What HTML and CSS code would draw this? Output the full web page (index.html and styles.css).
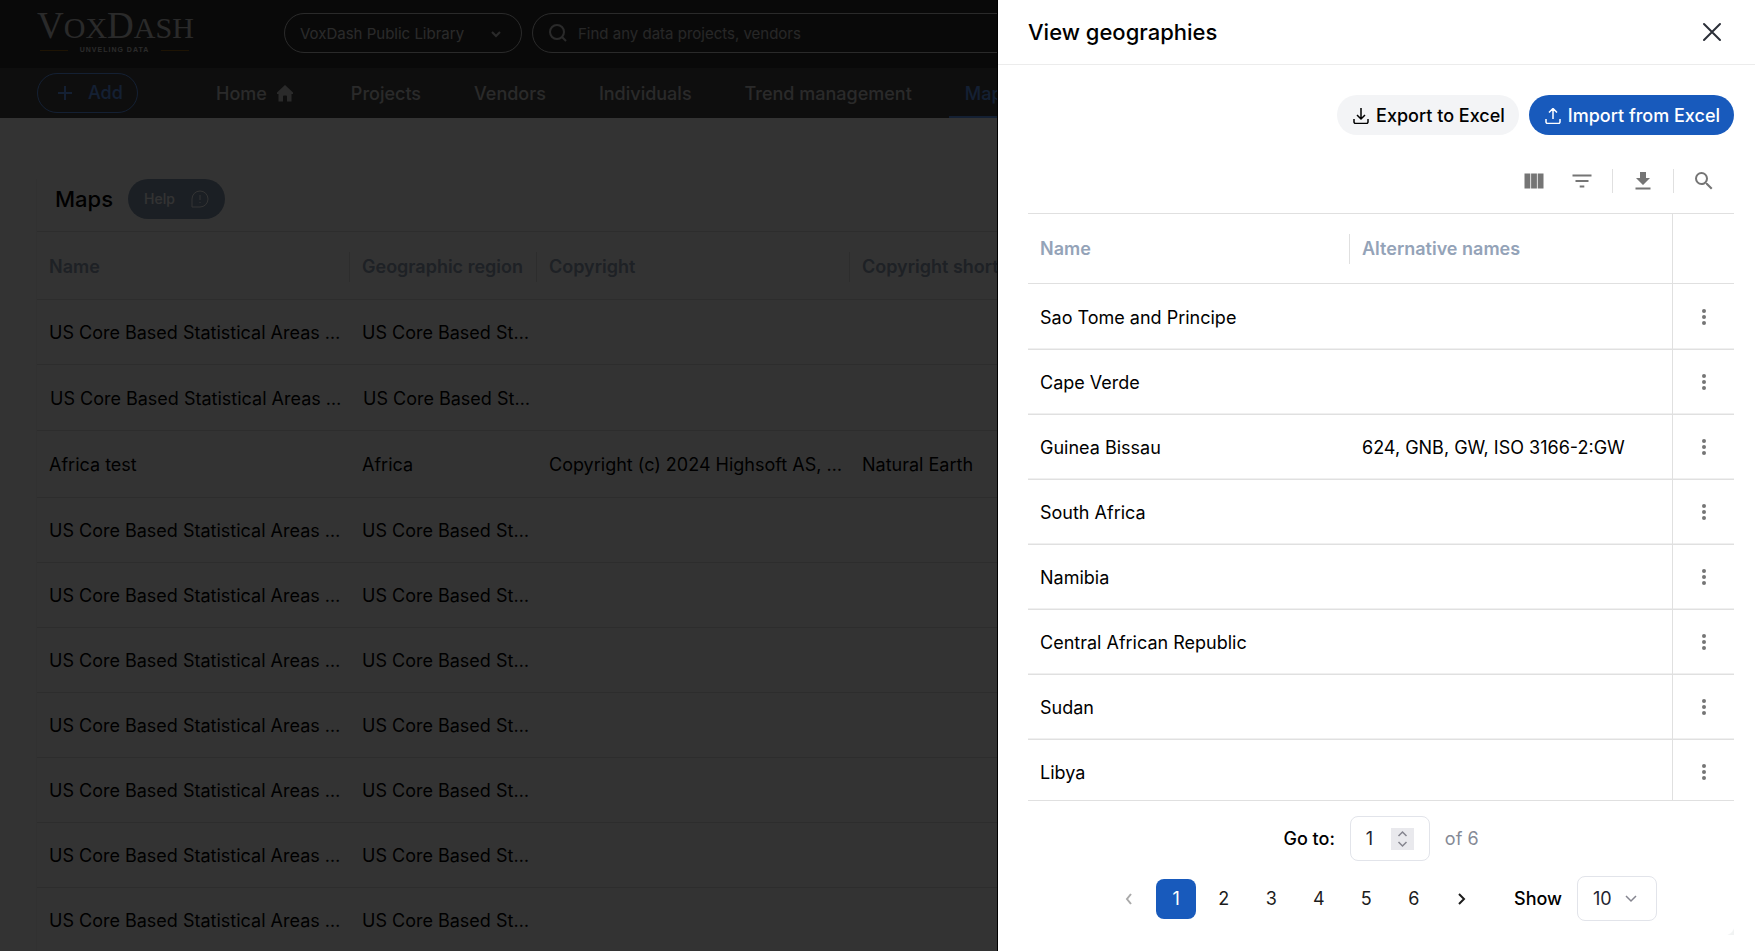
FILE: index.html
```html
<!DOCTYPE html>
<html lang="en">
<head>
    <meta charset="UTF-8">
    <meta name="viewport" content="width=device-width, initial-scale=1.0">
    <title>VoxDash - Maps</title>
    <link rel="stylesheet" href="styles.css">
</head>
<body>
    <!-- Page -->
    <div class="page">
        <header class="topbar">
            <a href="#" class="logo">
                <span class="logo-name">V<small>OX</small>D<small>ASH</small></span>
                <span class="logo-tag">UNVELING DATA</span>
            </a>
            <button class="library" type="button">
                VoxDash Public Library
                <svg width="12" height="12" viewBox="0 0 12 12"><path d="M2 4l4 4 4-4"/></svg>
            </button>
            <label class="search">
                <svg width="18" height="18" viewBox="0 0 18 18"><circle cx="8" cy="8" r="7"/><path d="M13 13l4 4"/></svg>
                <input type="text" placeholder="Find any data projects, vendors" aria-label="Search">
            </label>
        </header>

        <nav class="nav">
            <button class="add" type="button">
                <svg width="16" height="16" viewBox="0 0 16 16"><path d="M8 1v14M1 8h14"/></svg>
                Add
            </button>
            <a href="#" class="home">Home
                <svg width="16" height="17" viewBox="0 0 16 17"><path d="M8 0l8 7.500V9h-1.500v7.500H10V11.500a1 1 0 0 0-1-1H7a1 1 0 0 0-1 1v5H1.500V9H0V7.500z"/></svg>
            </a>
            <a href="#">Projects</a>
            <a href="#">Vendors</a>
            <a href="#">Individuals</a>
            <a href="#">Trend management</a>
            <a href="#" class="active">Maps</a>
        </nav>

        <main class="card">
            <div class="card-head">
                <h1>Maps</h1>
                <button class="help" type="button">
                    Help
                    <svg width="18" height="18" viewBox="0 0 18 18"><path d="M1 17V9a8 8 0 1 1 8 8z"/><path d="M9 5v5M9 12v1"/></svg>
                </button>
            </div>
            <table class="grid maps">
                <colgroup><col class="col-wide"><col class="col-region"><col class="col-wide"><col></colgroup>
                <thead>
                    <tr><th><span>Name</span></th><th><span>Geographic region</span></th><th><span>Copyright</span></th><th><span>Copyright short</span></th></tr>
                </thead>
                <tbody>
                    <tr><td>US Core Based Statistical Areas …</td><td>US Core Based St…</td><td></td><td></td></tr>
                    <tr class="current"><td>US Core Based Statistical Areas …</td><td>US Core Based St…</td><td></td><td></td></tr>
                    <tr class="tall"><td>Africa test</td><td>Africa</td><td>Copyright (c) 2024 Highsoft AS, …</td><td>Natural Earth</td></tr>
                    <tr><td>US Core Based Statistical Areas …</td><td>US Core Based St…</td><td></td><td></td></tr>
                    <tr><td>US Core Based Statistical Areas …</td><td>US Core Based St…</td><td></td><td></td></tr>
                    <tr><td>US Core Based Statistical Areas …</td><td>US Core Based St…</td><td></td><td></td></tr>
                    <tr><td>US Core Based Statistical Areas …</td><td>US Core Based St…</td><td></td><td></td></tr>
                    <tr><td>US Core Based Statistical Areas …</td><td>US Core Based St…</td><td></td><td></td></tr>
                    <tr><td>US Core Based Statistical Areas …</td><td>US Core Based St…</td><td></td><td></td></tr>
                    <tr><td>US Core Based Statistical Areas …</td><td>US Core Based St…</td><td></td><td></td></tr>
                </tbody>
            </table>
        </main>
    </div>

    <!-- Overlay -->
    <div class="overlay"></div>

    <!-- Drawer -->
    <aside class="drawer">
        <header class="drawer-head">
            <h2>View geographies</h2>
            <button class="close" type="button" aria-label="Close">
                <svg width="20" height="20" viewBox="0 0 20 20"><path d="M2 2l16 16M18 2L2 18"/></svg>
            </button>
        </header>

        <div class="drawer-body">
            <div class="actions">
                <button class="btn" type="button">
                    <svg width="16" height="16" viewBox="0 0 16 16"><path d="M8 0v10.500M4 7l4 4 4-4M1 11v3a1.500 1.500 0 0 0 1.500 1.500h11A1.500 1.500 0 0 0 15 14v-3"/></svg>
                    Export to Excel
                </button>
                <button class="btn btn-primary" type="button">
                    <svg width="16" height="16" viewBox="0 0 16 16"><path d="M8 11V1M4 4.500l4-4 4 4M1 11v3a1.500 1.500 0 0 0 1.500 1.500h11A1.500 1.500 0 0 0 15 14v-3"/></svg>
                    Import from Excel
                </button>
            </div>

            <div class="toolbar">
                <button type="button" aria-label="Columns"><svg width="24" height="24" viewBox="0 0 24 24"><path d="M2.500 4.500h5.800v15H2.500zM9.100 4.500h5.800v15H9.100zM15.700 4.500h5.800v15h-5.800z"/></svg></button>
                <button type="button" aria-label="Filters"><svg width="24" height="24" viewBox="0 0 24 24"><path d="M2.500 5.500h19v2h-19zM5.500 11h13v2h-13zM9.700 16.500h4.600v2H9.700z"/></svg></button>
                <span class="split"></span>
                <button type="button" aria-label="Download"><svg width="24" height="24" viewBox="0 0 24 24"><path d="M19 9h-4V3H9v6H5l7 7 7-7zM4.500 18.500h15v2h-15z"/></svg></button>
                <span class="split"></span>
                <button type="button" aria-label="Search"><svg width="24" height="24" viewBox="0 0 24 24"><path d="M15.500 14h-.79l-.28-.27A6.471 6.471 0 0 0 16 9.500 6.500 6.500 0 1 0 9.500 16c1.610 0 3.090-.59 4.230-1.570l.27.28v.79l5 4.990L20.490 19l-4.990-5zm-6 0C7.010 14 5 11.990 5 9.500S7.010 5 9.500 5 14 7.010 14 9.500 11.990 14 9.500 14z"/></svg></button>
            </div>

            <div class="table-wrap">
                <table class="grid geo">
                    <colgroup><col class="col-name"><col><col class="col-menu"></colgroup>
                    <thead>
                        <tr><th><span>Name</span></th><th><span>Alternative names</span></th><th></th></tr>
                    </thead>
                    <tbody id="geoRows"></tbody>
                </table>
            </div>

            <div class="goto">
                <label for="pageNo">Go to:</label>
                <span class="stepper">
                    <input id="pageNo" type="text" value="1">
                    <svg width="23" height="22" viewBox="0 0 23 22"><path d="M7.500 8l4-4 4 4M7.500 14l4 4 4-4"/></svg>
                </span>
                <span class="total">of 6</span>
            </div>

            <div class="pager">
                <div class="pages">
                    <button type="button" class="prev" aria-label="Previous"><svg width="10" height="16" viewBox="0 0 10 16"><path d="M7 3L3 8l4 5"/></svg></button>
                    <button type="button" class="active">1</button>
                    <button type="button">2</button>
                    <button type="button">3</button>
                    <button type="button">4</button>
                    <button type="button">5</button>
                    <button type="button">6</button>
                    <button type="button" aria-label="Next"><svg width="10" height="16" viewBox="0 0 10 16"><path d="M3 3l5 5-5 5"/></svg></button>
                </div>
                <label for="pageSize">Show</label>
                <span class="size">
                    <select id="pageSize"><option>10</option><option>25</option><option>50</option></select>
                    <svg width="12" height="8" viewBox="0 0 12 8"><path d="M1 1l5 5 5-5"/></svg>
                </span>
            </div>
        </div>
    </aside>

    <script>
        const rows = [
            ['Sao Tome and Principe', ''],
            ['Cape Verde', ''],
            ['Guinea Bissau', '624, GNB, GW, ISO 3166-2:GW'],
            ['South Africa', ''],
            ['Namibia', ''],
            ['Central African Republic', ''],
            ['Sudan', ''],
            ['Libya', '']
        ];
        const dots = '<button class="more" type="button" aria-label="Row menu"><svg width="4" height="18" viewBox="0 0 4 18"><circle cx="2" cy="3" r="2"/><circle cx="2" cy="9" r="2"/><circle cx="2" cy="15" r="2"/></svg></button>';

        document.getElementById('geoRows').innerHTML = rows.map(function(r) {
            return '<tr><td>' + r[0] + '</td><td>' + r[1] + '</td><td>' + dots + '</td></tr>';
        }).join('');
    </script>
</body>
</html>
```

FILE: styles.css
```css
* {
    margin: 0;
    padding: 0;
    box-sizing: border-box;
}

body {
    height: 100vh;
    overflow: hidden;
    font-family: Inter, "Liberation Sans", sans-serif;
    font-size: 18px;
    line-height: 24px;
    color: #000;
    background: #fff;
}

button, input, select {
    font: inherit;
    color: inherit;
    background: none;
    border: none;
    outline: none;
}

button {
    cursor: pointer;
}

a {
    color: inherit;
    text-decoration: none;
}

svg {
    flex-shrink: 0;
    fill: none;
    stroke: currentColor;
    stroke-width: 2;
}

/* Page */
.page {
    height: 100vh;
    overflow: hidden;
}

.topbar {
    display: flex;
    align-items: center;
    height: 68px;
    padding: 0 37px 2px;
    color: #d0d0d0;
    background: #303030;
}

.logo {
    display: flex;
    flex-direction: column;
    width: 155px;
    margin-right: 92px;
    color: #d0d0d0;
    font-family: "Liberation Serif", serif;
}

.logo-name {
    font-size: 37px;
    line-height: 32px;
    white-space: nowrap;
}

.logo-name small {
    font-size: 30px;
}

.logo-tag {
    display: flex;
    align-items: center;
    justify-content: space-between;
    padding: 0 3px;
    font: 700 7px/12px "Liberation Sans", sans-serif;
    letter-spacing: 1px;
}

.logo-tag::before,
.logo-tag::after {
    content: "";
    width: 28px;
    height: 1px;
    background: #966414;
}

.library,
.search {
    display: flex;
    align-items: center;
    height: 40px;
    border: 1px solid #d0d0d0;
    border-radius: 20px;
    font-size: 15px;
}

.library {
    justify-content: space-between;
    width: 238px;
    margin-right: 10px;
    padding: 2px 19px 0 15px;
}

.search {
    flex: 1;
    gap: 11px;
    padding: 0 16px;
}

.search input {
    flex: 1;
    padding-top: 2px;
}

.search input::placeholder {
    color: #c0c0c0;
}

.nav {
    display: flex;
    align-items: center;
    gap: 21px;
    height: 50px;
    padding: 0 37px;
    font-weight: 500;
    color: #d0d0d0;
    background: #474747;
}

.nav a {
    display: flex;
    align-items: center;
    gap: 12px;
    height: 50px;
    padding: 3px 16px 0;
    border-bottom: 2px solid transparent;
}

.nav .home {
    gap: 10px;
    margin-right: 5px;
}

.nav a svg {
    fill: currentColor;
    stroke: none;
}

.nav a.active {
    color: #64a0ff;
    border-color: #64a0ff;
}

.add {
    display: flex;
    align-items: center;
    gap: 15px;
    width: 101px;
    height: 40px;
    margin-right: 41px;
    padding: 0 19px;
    border: 1px solid #64a0ff;
    border-radius: 20px;
    color: #64a0ff;
    font-weight: 500;
}

.card {
    margin: 61px 36px 0;
    border-left: 1px solid #f2f2f2;
}

.card-head {
    display: flex;
    align-items: center;
    gap: 15px;
    height: 52px;
    padding: 0 18px 12px;
}

.card-head h1,
.drawer-head h2 {
    font-size: 22px;
    font-weight: 500;
}

.help {
    display: flex;
    align-items: center;
    gap: 16px;
    height: 40px;
    padding: 0 16px;
    border-radius: 20px;
    color: #fff;
    background: #879bb4;
    font-size: 14px;
    font-weight: 500;
}

.help svg {
    stroke-width: 1;
}

/* Tables */
.grid {
    width: 100%;
    border-collapse: separate;
    border-spacing: 0;
    table-layout: fixed;
}

.grid th,
.grid td {
    height: 65px;
    padding: 2px 12px 0;
    border-bottom: 1px solid #e0e0e0;
    text-align: left;
    font-weight: 400;
    white-space: nowrap;
}

.grid th {
    color: #94a3b8;
    font-weight: 600;
}

.grid th span {
    display: block;
}

.grid th + th span {
    margin-left: -13px;
    padding-left: 12px;
    border-left: 1px solid #e0e0e0;
    line-height: 30px;
}

.maps th {
    height: 69px;
    border-top: 1px solid #e0e0e0;
}

.maps .current td {
    height: 66px;
}

.maps .tall td {
    height: 67px;
}

.maps .current td:first-child,
.maps .current td:nth-child(2) {
    padding-left: 13px;
}

.col-wide {
    width: 313px;
}

.col-region {
    width: 187px;
}

/* Overlay */
.overlay {
    position: fixed;
    inset: 0;
    background: rgba(0, 0, 0, 0.8);
}

/* Drawer */
.drawer {
    position: fixed;
    top: 0;
    right: 0;
    bottom: 0;
    display: flex;
    flex-direction: column;
    width: 758px;
    border-left: 1px solid #000;
    background: #fff;
}

.drawer-head {
    display: flex;
    align-items: center;
    justify-content: space-between;
    height: 65px;
    padding: 0 33px 0 30px;
    border-bottom: 1px solid #ececec;
}

.close {
    display: flex;
    color: #2b2f38;
}

.close svg {
    stroke-linecap: round;
}

.drawer-body {
    position: relative;
    display: flex;
    flex: 1;
    flex-direction: column;
    min-height: 0;
    padding: 30px 21px 30px 30px;
}

/* Shaded corner of the table panel */
.drawer-body::after {
    content: "";
    position: absolute;
    right: 21px;
    bottom: 16px;
    width: 10px;
    height: 10px;
    background: radial-gradient(circle at 0 0, #fff 10px, #f1f3f3 11px);
}

.actions {
    display: flex;
    justify-content: flex-end;
    gap: 10px;
}

.btn {
    display: flex;
    align-items: center;
    gap: 7px;
    height: 40px;
    padding: 2px 14px 0 16px;
    border-radius: 20px;
    background: #f3f4f6;
    font-weight: 500;
}

.btn svg {
    stroke-width: 1.500;
}

.btn-primary {
    color: #fff;
    background: #185abc;
}

.toolbar {
    display: flex;
    align-items: center;
    justify-content: flex-end;
    margin: 22px 6px 8px 0;
    color: #757575;
}

.toolbar button {
    display: flex;
    padding: 12px;
}

.toolbar svg,
.more svg {
    fill: currentColor;
    stroke: none;
}

.split {
    width: 1px;
    height: 24px;
    margin: 0 6px;
    background: #e0e0e0;
}

.table-wrap {
    flex: 1;
    min-height: 0;
    overflow: hidden;
    border-top: 1px solid #e0e0e0;
    border-bottom: 1px solid #e0e0e0;
}

.geo th {
    height: 70px;
    padding-top: 0;
}

.geo td {
    box-shadow: inset 0 -1px #f0f0f0;
}

.geo tr:first-child td {
    height: 66px;
}

.geo th:last-child,
.geo td:last-child {
    padding: 0;
    border-left: 1px solid #e0e0e0;
    text-align: center;
}

.col-name {
    width: 322px;
}

.col-menu {
    width: 62px;
}

.more {
    padding: 8px;
    color: #757575;
    line-height: 0;
}

.goto,
.pager {
    display: flex;
    align-items: center;
    justify-content: center;
}

.goto {
    gap: 15px;
    margin: 15px 0;
}

.goto label,
.pager label {
    font-weight: 500;
}

.stepper,
.size {
    display: flex;
    align-items: center;
    width: 80px;
    height: 45px;
    padding: 0 15px;
    border: 1px solid #e2e4ea;
    border-radius: 8px;
    color: #232530;
}

.stepper input {
    width: 25px;
}

.stepper svg {
    color: #85858f;
    background: #e9e9ed;
    stroke-width: 1.500;
}

.total {
    color: #858a96;
}

.pages {
    display: grid;
    grid-template-columns: repeat(8, 1fr);
    width: 380px;
    margin-right: 29px;
}

.pages button {
    display: flex;
    align-items: center;
    justify-content: center;
    justify-self: center;
    width: 40px;
    height: 40px;
    border-radius: 8px;
    color: #1c1c1c;
}

.pages .prev {
    color: #aaa;
}

.pages .active {
    color: #fff;
    background: #185abc;
}

.pager label {
    margin-right: 15px;
}

.size select {
    width: 32px;
    appearance: none;
}

.size svg {
    color: #85858f;
    stroke-width: 1.500;
}
```
